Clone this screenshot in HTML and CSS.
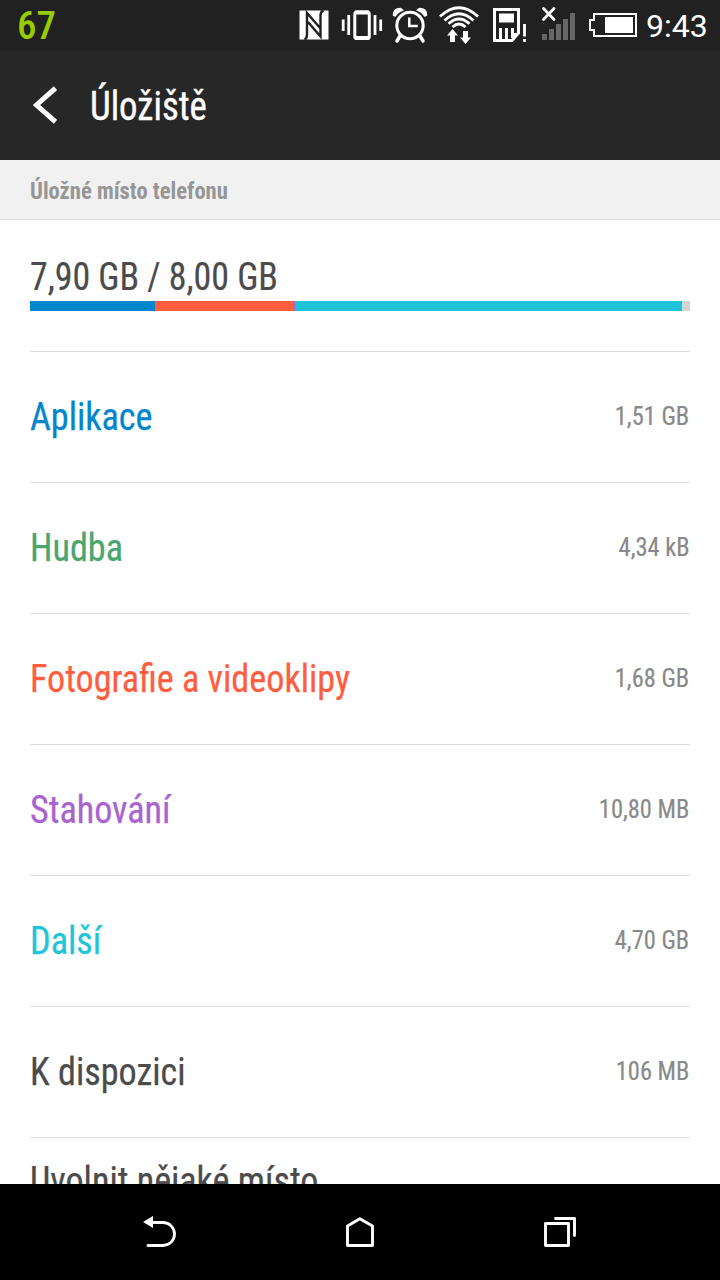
FILE: index.html
```html
<!DOCTYPE html>
<html lang="cs">
<head>
<meta charset="utf-8">
<title>Úložiště</title>
<link rel="stylesheet" href="styles.css">
</head>
<body>
<div class="screen">
  <div class="status">
    <span class="percent">67</span>
    <svg class="icons" viewBox="290 0 350 50" width="350" height="50" fill="none" stroke="#fff">
      <rect x="299.500" y="10.500" width="29" height="29" fill="#fff" stroke="none"/>
      <path d="M304.500 39.500q2.500-1 2.500-5V13l13.500 15.500M323.500 10.500q-3 1-3 5V36.500L308 22" stroke="#212121" stroke-width="2.400"/>
      <path d="M343.200 19.500V31M348.700 15v20M375 15v20M380.700 19.500V31" stroke-width="2.800"/>
      <rect x="354.800" y="12" width="14.500" height="26.500" rx="2" stroke-width="3"/>
      <path d="M355 12.500h14M355 38h14" stroke-width="4"/>
      <circle cx="410" cy="25.500" r="13.200" stroke-width="3"/>
      <path d="M409.300 17.500v8.500h8.500" stroke-width="2.500"/>
      <path d="M400 36l-3 5M420 36l3 5" stroke-width="3.500" stroke-linecap="round"/>
      <path d="M393.500 15q0-6.500 7-6.500l2 1.500q-5 2-7.500 6zM426.500 15q0-6.500-7-6.500l-2 1.500q5 2 7.500 6z" fill="#fff" stroke-width="1.500"/>
      <path d="M440 16.500Q459 -1 478 16.500M444.500 20.500Q459 7 473.500 20.500M448.500 23.800Q459 14 469.500 23.800M452.500 27Q459 21 465.500 27" stroke-width="2.900"/>
      <path d="M452.500 29l5.500 6.500h-3v6.500h-5v-6.500h-3zM465.500 44l-5.500-6.500h3v-6.500h5v6.500h3z" fill="#fff" stroke="none"/>
      <path d="M494.500 9.500h24V33l-6.500 7.500h-17.500z" stroke-width="3"/>
      <path d="M499 13.500h15v9h-15zM499 28h3v11h-3zM505 28h3v11h-3zM511 28h3v10h-3zM512 33h6l-6 7z" fill="#fff" stroke="none"/>
      <path d="M524.500 24v12.500M524.500 39v3" stroke-width="2.800"/>
      <path d="M543.500 8.500l10.500 11M554 8.500l-10.500 11" stroke-width="2.800" stroke-linecap="round"/>
      <path d="M542 34h5v6h-5zM549 29h5v11h-5zM556 24h5v16h-5zM563 19h5v21h-5zM570 13h5v27h-5z" fill="#666" stroke="none"/>
      <path d="M594 14h42v22h-42v-6h-4V20h4z" stroke-width="2"/>
      <path d="M605 17h28v16h-28z" fill="#fff" stroke="none"/>
    </svg>
    <span class="clock">9:43</span>
  </div>
  <div class="appbar">
    <svg class="back" viewBox="0 0 24 38" width="24" height="38" fill="none" stroke="#fff"><path d="M22.500 2.200L3.500 19l19 16.800" stroke-width="5"/></svg>
    <h1 class="title">Úložiště</h1>
  </div>
  <h2 class="section"><span class="label">Úložné místo telefonu</span></h2>
  <div class="content">
    <div class="summary">
      <div class="total">7,90 GB / 8,00 GB</div>
      <div class="bar"><i class="seg apps"></i><i class="seg photos"></i><i class="seg downloads"></i><i class="seg other"></i></div>
    </div>
    <div class="row c-apps"><span class="name">Aplikace</span><span class="value">1,51 GB</span></div>
    <div class="row c-music"><span class="name">Hudba</span><span class="value">4,34 kB</span></div>
    <div class="row c-photos"><span class="name">Fotografie a videoklipy</span><span class="value">1,68 GB</span></div>
    <div class="row c-downloads"><span class="name">Stahování</span><span class="value">10,80 MB</span></div>
    <div class="row c-other"><span class="name">Další</span><span class="value">4,70 GB</span></div>
    <div class="row"><span class="name">K dispozici</span><span class="value">106 MB</span></div>
    <div class="row free"><span class="name">Uvolnit nějaké místo</span></div>
  </div>
  <div class="nav">
    <svg viewBox="140 1214 40 36" width="40" height="36" fill="none" stroke="#fff"><path d="M152 1222.500h11a11.500 11.500 0 0 1 0 23h-15" stroke-width="2.800" stroke-linecap="round"/><path d="M143 1222l10-6v12z" fill="#fff" stroke="none"/></svg>
    <svg viewBox="340 1214 40 36" width="40" height="36" fill="none" stroke="#fff"><path d="M347.500 1245.500v-19.500l12.300-7.300 12.700 7.300v19.500z" stroke-width="2.900" stroke-linejoin="round"/></svg>
    <svg viewBox="540 1214 40 36" width="40" height="36" fill="none" stroke="#fff" stroke-width="2.900" stroke-linejoin="round"><path d="M545.500 1223.500h23v22h-23zM555.500 1218.500h19v17" stroke-linecap="round"/></svg>
  </div>
</div>
</body>
</html>
```
FILE: styles.css
```css
* { box-sizing: border-box; }
body { margin: 0; font-family: "Roboto Condensed", Roboto, sans-serif; font-stretch: 75%; color: #4b4b4b; }
.screen { width: 720px; height: 1280px; display: flex; flex-direction: column; overflow: hidden; background: #fff; }
.status { height: 50px; flex: none; background: #212121; display: flex; align-items: center; padding-left: 17px; }
.percent { width: 273px; padding-top: 3px; color: #99cc00; font-size: 39px; font-weight: 500; line-height: 47px; }
.icons { flex: none; display: block; }
.clock { padding: 2px 0 0 6px; color: #fff; font-family: Roboto, sans-serif; font-stretch: 100%; font-size: 32px; line-height: 48px; }
.appbar { height: 110px; flex: none; background: #272727; display: flex; align-items: center; padding-left: 33px; gap: 33px; }
.title { margin: 0; padding-top: 2px; color: #fff; font-size: 40px; font-weight: 400; -webkit-text-stroke: 0.4px #fff; transform: scaleX(0.92); transform-origin: left; }
.section { height: 60px; flex: none; margin: 0; padding-left: 30px; background: #f1f1f1; border-bottom: 1px solid #ddd; color: #969696; font-size: 24px; font-weight: 700; line-height: 62px; }
.label { display: inline-block; transform: scaleX(0.94); transform-origin: left; }
.content { flex: 1; min-height: 0; overflow: hidden; padding: 0 30px; }
.summary { height: 132px; padding-top: 34px; border-bottom: 1px solid #ddd; }
.total { height: 47px; font-size: 38px; line-height: 46px; white-space: nowrap; transform: scaleX(0.943); transform-origin: left; -webkit-text-stroke: 0.2px currentColor; }
.bar { height: 10px; display: flex; background: #d5d5d5; }
.seg { height: 10px; }
.apps { width: 125px; background: #0086cd; }
.photos { width: 139px; background: #ff5d3e; }
.downloads { width: 1px; background: #a864d0; }
.other { width: 387px; background: #20c4da; }
.row { height: 131px; display: flex; align-items: center; justify-content: space-between; border-bottom: 1px solid #ddd; }
.name { font-size: 38px; white-space: nowrap; transform: scaleX(0.951); transform-origin: left; -webkit-text-stroke: 0.25px currentColor; }
.value { font-size: 26px; color: #898989; white-space: nowrap; padding: 0 1px 3px 0; transform: scaleX(0.94); transform-origin: right; -webkit-text-stroke: 0.2px currentColor; }
.c-apps { color: #0086cd; }
.c-music { color: #4ba56e; }
.c-photos { color: #ff5d3e; }
.c-downloads { color: #a864d0; }
.c-other { color: #20c4da; }
.free { height: 86px; }
.nav { height: 96px; flex: none; background: #000; display: flex; align-items: center; justify-content: center; gap: 160px; }
```
